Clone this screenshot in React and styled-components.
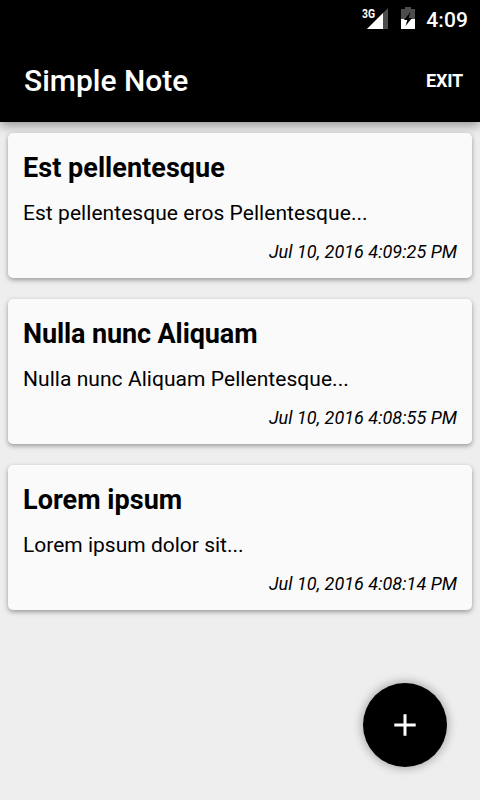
import React from 'react';
import styled, { createGlobalStyle } from 'styled-components';

const GlobalStyle = createGlobalStyle`
  * {
    box-sizing: border-box;
  }
  body {
    margin: 0;
    background-color: #eeeeee;
    font-family: Roboto, sans-serif;
    color: #000;
  }
`;

const Screen = styled.div`
  display: flex;
  flex-direction: column;
  width: 480px;
  height: 800px;
  overflow: hidden;
  background-color: #eeeeee;
  position: relative;
`;

const Header = styled.header`
  flex: none;
  height: 122px;
  background-color: #000;
  color: #fff;
  box-shadow: 0 4px 10px rgba(0, 0, 0, 0.36);
`;

const StatusBar = styled.div`
  display: flex;
  justify-content: flex-end;
  align-items: center;
  height: 38px;
  padding-right: 12px;
`;

const SignalIcon = styled.svg`
  width: 28px;
  height: 24px;
  margin-right: 11px;
`;

const BatteryIcon = styled.svg`
  width: 14px;
  height: 22px;
  margin: 0 11px 2px 0;
`;

const Clock = styled.span`
  padding-top: 2px;
  font-size: 21px;
  font-weight: 500;
  line-height: 24px;
  letter-spacing: 0.1px;
`;

const Toolbar = styled.div`
  display: flex;
  align-items: center;
  justify-content: space-between;
  height: 84px;
  padding: 0 17px 0 24px;
`;

const Title = styled.h1`
  margin: 0;
  font-size: 30px;
  font-weight: 500;
`;

const ExitButton = styled.button`
  padding: 0;
  border: none;
  background: none;
  color: #fff;
  font-family: inherit;
  font-size: 18px;
  font-weight: 700;
  letter-spacing: -0.2px;
`;

const NoteList = styled.ul`
  list-style: none;
  margin: 0;
  padding: 11px 8px;
  display: flex;
  flex-direction: column;
  gap: 21px;
`;

const NoteCard = styled.li`
  height: 145px;
  padding: 18px 15px 0;
  border-radius: 5px;
  background-color: #fafafa;
  box-shadow: 0 2px 5px rgba(0, 0, 0, 0.36);
`;

const NoteTitle = styled.h2`
  margin: 0;
  font-size: 27px;
  font-weight: 700;
  line-height: 34px;
  letter-spacing: ${({ $tracking }) => $tracking}px;
`;

const NoteText = styled.p`
  margin: 14px 0 0;
  font-size: 21px;
  line-height: 28px;
  letter-spacing: ${({ $tracking }) => $tracking}px;
`;

const NoteDate = styled.time`
  display: block;
  margin-top: 13px;
  font-size: 18px;
  font-style: italic;
  line-height: 24px;
  letter-spacing: 0.03px;
  text-align: right;
`;

const AddButton = styled.button`
  position: absolute;
  right: 33px;
  bottom: 33px;
  width: 84px;
  height: 84px;
  padding: 0;
  border: none;
  border-radius: 50%;
  display: flex;
  align-items: center;
  justify-content: center;
  background-color: #000;
  box-shadow: 0 0 9px 2px rgba(0, 0, 0, 0.26);
`;

const notes = [
  {
    title: 'Est pellentesque',
    text: 'Est pellentesque eros Pellentesque...',
    date: 'Jul 10, 2016 4:09:25 PM',
    titleTracking: 0.04,
    textTracking: 0.05,
  },
  {
    title: 'Nulla nunc Aliquam',
    text: 'Nulla nunc Aliquam Pellentesque...',
    date: 'Jul 10, 2016 4:08:55 PM',
    titleTracking: -0.11,
    textTracking: 0.05,
  },
  {
    title: 'Lorem ipsum',
    text: 'Lorem ipsum dolor sit...',
    date: 'Jul 10, 2016 4:08:14 PM',
    titleTracking: 0.03,
    textTracking: 0,
  },
];

function App() {
  return (
    <Screen>
      <GlobalStyle />
      <Header>
        <StatusBar>
          <SignalIcon viewBox="0 0 28 24">
            <path d="M26 1V22H5Z" fill="#4d4d4d" />
            <path d="M21 6V22H5Z" fill="#fff" />
            <text x="0" y="10.5" fill="#fff" fontSize="12" fontWeight="700" textLength="13" lengthAdjust="spacingAndGlyphs">3G</text>
          </SignalIcon>
          <BatteryIcon viewBox="0 0 14 22">
            <path d="M4 0H10V2H14V22H0V2H4Z" fill="#4d4d4d" />
            <path d="M0 12H14V22H0Z" fill="#fff" />
            <path d="M9.5 5L3 13H6.3L4.5 19L11 11H7.7Z" fill="#000" />
          </BatteryIcon>
          <Clock>4:09</Clock>
        </StatusBar>
        <Toolbar>
          <Title>Simple Note</Title>
          <ExitButton>EXIT</ExitButton>
        </Toolbar>
      </Header>
      <NoteList>
        {notes.map((note) => (
          <NoteCard key={note.date}>
            <NoteTitle $tracking={note.titleTracking}>{note.title}</NoteTitle>
            <NoteText $tracking={note.textTracking}>{note.text}</NoteText>
            <NoteDate>{note.date}</NoteDate>
          </NoteCard>
        ))}
      </NoteList>
      <AddButton aria-label="Add note">
        <svg width="22" height="22" viewBox="0 0 22 22">
          <path d="M11 0.3V21.7M0.3 11H21.7" stroke="#fff" strokeWidth="3" />
        </svg>
      </AddButton>
    </Screen>
  );
}

export default App;
